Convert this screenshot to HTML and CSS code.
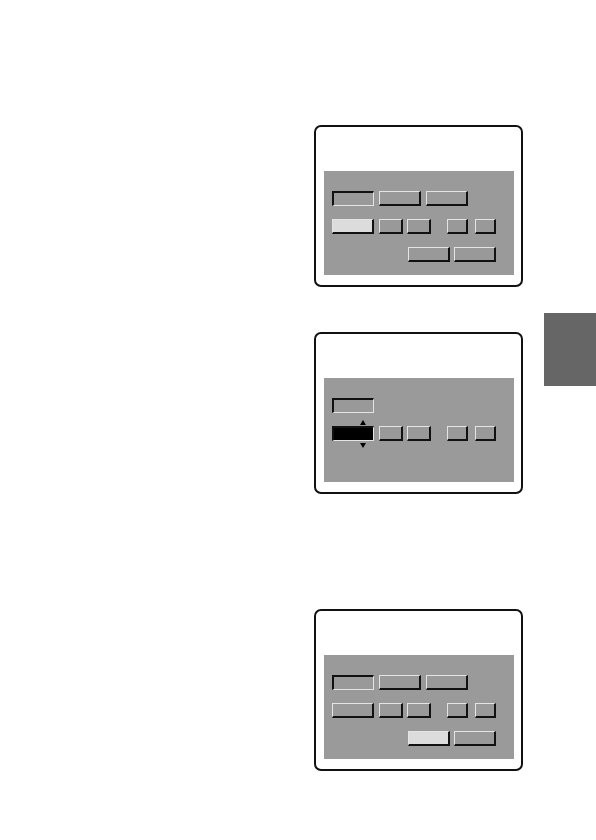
FILE: index.html
```html
<!DOCTYPE html>
<html>
<head>
<meta charset="utf-8">
<link rel="stylesheet" href="styles.css">
</head>
<body>
<div class="page">
  <div class="column">
    <div class="frame f1">
      <div class="panel">
        <div class="row">
          <div class="btn big sunken"></div>
          <div class="btn big"></div>
          <div class="btn big"></div>
        </div>
        <div class="row">
          <div class="btn big light"></div>
          <div class="btn small"></div>
          <div class="btn small g4"></div>
          <div class="btn tiny g16"></div>
          <div class="btn tiny g7"></div>
        </div>
        <div class="row end">
          <div class="btn big"></div>
          <div class="btn big g4"></div>
        </div>
      </div>
    </div>

    <div class="frame f2">
      <div class="panel">
        <div class="row">
          <div class="btn big sunken"></div>
        </div>
        <div class="row">
          <div class="btn big black sunken">
            <span class="arrow up"></span>
            <span class="arrow down"></span>
          </div>
          <div class="btn small"></div>
          <div class="btn small g4"></div>
          <div class="btn tiny g16"></div>
          <div class="btn tiny g7"></div>
        </div>
      </div>
    </div>

    <div class="frame f3">
      <div class="panel">
        <div class="row">
          <div class="btn big sunken"></div>
          <div class="btn big"></div>
          <div class="btn big"></div>
        </div>
        <div class="row">
          <div class="btn big"></div>
          <div class="btn small"></div>
          <div class="btn small g4"></div>
          <div class="btn tiny g16"></div>
          <div class="btn tiny g7"></div>
        </div>
        <div class="row end">
          <div class="btn big light"></div>
          <div class="btn big g4"></div>
        </div>
      </div>
    </div>
  </div>
  <div class="tab"></div>
</div>
</body>
</html>
```

FILE: styles.css
```css
html, body {
  margin: 0;
  padding: 0;
  background: #ffffff;
}
.page {
  width: 596px;
  height: 840px;
  display: flex;
  align-items: flex-start;
}
.column {
  margin-left: 314px;
  width: 209px;
  display: flex;
  flex-direction: column;
}
.frame {
  box-sizing: border-box;
  width: 209px;
  height: 162px;
  border: 2px solid #111111;
  border-radius: 7px;
  padding: 44px 7px 10px 8px;
  background: #ffffff;
}
.f1 { margin-top: 125px; }
.f2 { margin-top: 45px; }
.f3 { margin-top: 115px; }
.panel {
  box-sizing: border-box;
  width: 190px;
  height: 104px;
  background: #9a9a9a;
  padding: 20px 0 0 8px;
  display: flex;
  flex-direction: column;
  gap: 13px;
}
.row {
  display: flex;
  height: 15px;
  gap: 5px;
}
.row.end {
  padding-left: 76px;
  gap: 0;
}
.btn {
  position: relative;
  box-sizing: border-box;
  height: 15px;
  background: #999999;
  border-top: 1px solid #e4e4e4;
  border-left: 1px solid #e4e4e4;
  border-bottom: 2px solid #111111;
  border-right: 2px solid #111111;
}
.btn.sunken {
  border-top: 2px solid #111111;
  border-left: 2px solid #111111;
  border-bottom: 1px solid #e4e4e4;
  border-right: 1px solid #e4e4e4;
}
.big { width: 42px; }
.small { width: 24px; }
.tiny { width: 21px; }
.row .g4 { margin-left: -1px; }
.row.end .g4 { margin-left: 4px; }
.g16 { margin-left: 11px; }
.g7 { margin-left: 2px; }
.light { background: #dcdcdc; }
.black { background: #000000; }
.arrow {
  position: absolute;
  left: 26px;
  width: 0;
  height: 0;
  border-left: 3.5px solid transparent;
  border-right: 3.5px solid transparent;
}
.arrow.up {
  top: -8px;
  border-bottom: 5px solid #000000;
}
.arrow.down {
  bottom: -8px;
  border-top: 5px solid #000000;
}
.tab {
  margin-left: 21px;
  margin-top: 313px;
  width: 52px;
  height: 73px;
  background: #666666;
}
```
